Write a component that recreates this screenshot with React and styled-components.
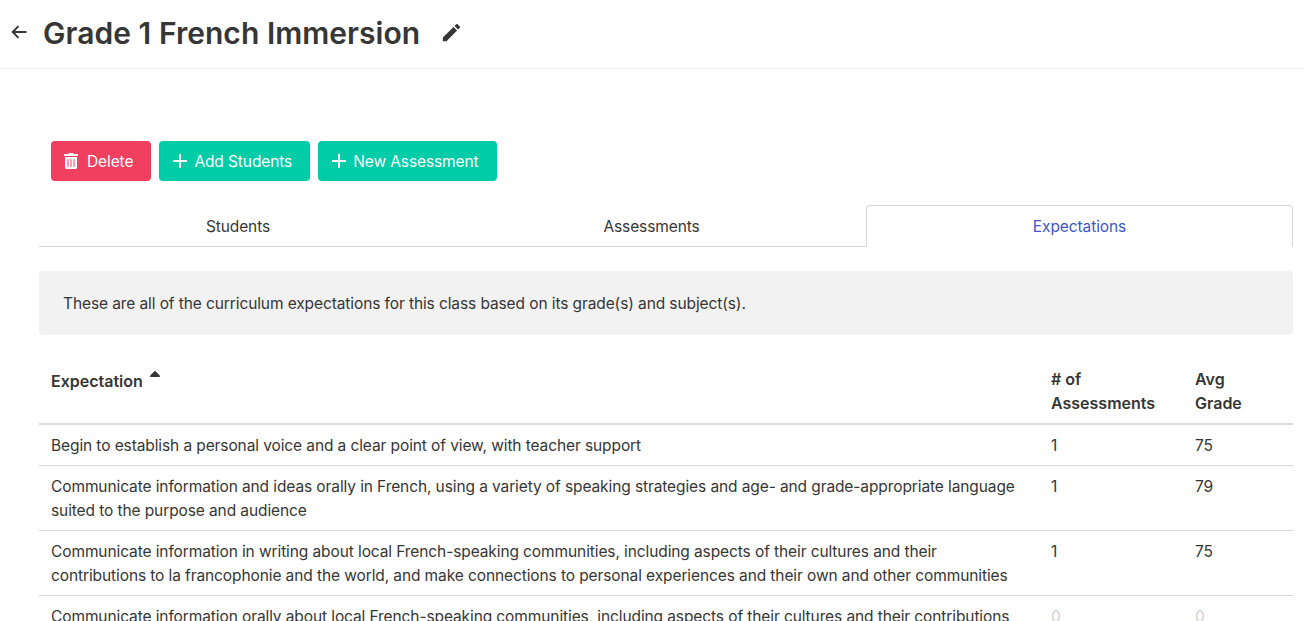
import styled, { createGlobalStyle } from "styled-components";
import { FaTrashAlt, FaSortUp } from "react-icons/fa";
import { MdAdd, MdEdit } from "react-icons/md";

const GlobalStyle = createGlobalStyle`
    html, body {
        margin: 0;
        height: 100%;
        overflow: hidden;
        background: #fff;
    }
    body {
        font-family: Inter, "Liberation Sans", sans-serif;
        font-size: 15.5px;
        letter-spacing: -0.1px;
        line-height: 24px;
        color: #363636;
    }
`;

const Header = styled.header`
    display: flex;
    align-items: center;
    box-sizing: border-box;
    height: 69px;
    border-bottom: 1px solid #f1f1f1;
    padding: 0 0 4px 11px;
`;

const BackIcon = styled.svg`
    width: 16px;
    height: 14px;
    fill: none;
    stroke: #363636;
    stroke-width: 1.9;
`;

const Title = styled.h1`
    margin: 2px 0 0 16px;
    font-size: 30px;
    letter-spacing: 0.04px;
    line-height: 40px;
    font-weight: 600;
    color: #363636;
`;

const EditIcon = styled(MdEdit)`
    width: 23px;
    height: 23px;
    margin-left: 20px;
    color: #363636;
`;

const Content = styled.main`
    padding: 72px 11px 0 39px;
`;

const Toolbar = styled.div`
    display: flex;
    gap: 8px;
    padding-left: 12px;
`;

const ActionButton = styled.button`
    display: flex;
    align-items: center;
    gap: ${({ $danger }) => ($danger ? "8px" : "2px")};
    height: 40px;
    padding: 0 18px 0 ${({ $danger }) => ($danger ? "12px" : "9px")};
    border: none;
    border-radius: 4px;
    background: ${({ $danger }) => ($danger ? "#f1405f" : "#00cca8")};
    color: #fff;
    font: inherit;
    letter-spacing: inherit;

    svg {
        flex: none;
    }
`;

const ButtonLabel = styled.span`
    padding-top: 2px;
`;

const Tabs = styled.div`
    display: grid;
    grid-template-columns: 398px 429px 427px;
    height: 42px;
    margin-top: 24px;
`;

const Tab = styled.div`
    display: flex;
    align-items: center;
    justify-content: center;
    box-sizing: border-box;
    padding-top: 2px;
    color: ${({ $active }) => ($active ? "#3e56c4" : "#363636")};
    border: 1px solid ${({ $active }) => ($active ? "#d5d5d5" : "transparent")};
    border-bottom: ${({ $active }) => ($active ? "1px solid transparent" : "1px solid #d5d5d5")};
    border-radius: ${({ $active }) => ($active ? "4px 4px 0 0" : "0")};
    ${({ $active }) => (!$active ? "border-left: none; border-right: none;" : "")}
`;

const Notice = styled.div`
    margin-top: 24px;
    height: 64px;
    display: flex;
    align-items: center;
    padding: 2px 24px 0;
    box-sizing: border-box;
    background: #f2f2f2;
    border-radius: 4px;
`;

const Table = styled.table`
    width: 1254px;
    margin-top: 20px;
    border-collapse: collapse;
    table-layout: fixed;
`;

const HeadCell = styled.th`
    padding: 12px 12px 8px;
    text-align: left;
    vertical-align: top;
    font-size: 16px;
    letter-spacing: 0;
    font-weight: 600;
    border-bottom: 2px solid #d9d9d9;
`;

const SortLabel = styled.div`
    display: flex;
    align-items: flex-start;
    gap: 6px;
    margin-top: 2px;
`;

const SortIcon = styled(FaSortUp)`
    width: 12px;
    height: 18px;
`;

const Cell = styled.td`
    padding: 9px 12px 7px;
    vertical-align: top;
    border-bottom: 1px solid #d9d9d9;
    color: ${({ $muted }) => ($muted ? "#d0d0d0" : "inherit")};
`;

const rows = [
    {
        text: "Begin to establish a personal voice and a clear point of view, with teacher support",
        count: 1,
        grade: 75,
    },
    {
        text: "Communicate information and ideas orally in French, using a variety of speaking strategies and age- and grade-appropriate language suited to the purpose and audience",
        count: 1,
        grade: 79,
    },
    {
        text: "Communicate information in writing about local French-speaking communities, including aspects of their cultures and their contributions to la francophonie and the world, and make connections to personal experiences and their own and other communities",
        count: 1,
        grade: 75,
    },
    {
        text: "Communicate information orally about local French-speaking communities, including aspects of their cultures and their contributions to la francophonie and the world",
        count: 0,
        grade: 0,
    },
];

const App = () => {
    return (
        <>
            <GlobalStyle />
            <Header>
                <BackIcon viewBox="0 0 16 14">
                    <path d="M15.5 7H2M7.5 1.2 1.7 7l5.8 5.8" />
                </BackIcon>
                <Title>Grade 1 French Immersion</Title>
                <EditIcon />
            </Header>
            <Content>
                <Toolbar>
                    <ActionButton $danger>
                        <FaTrashAlt size={16} />
                        <ButtonLabel>Delete</ButtonLabel>
                    </ActionButton>
                    <ActionButton>
                        <MdAdd size={24} />
                        <ButtonLabel>Add Students</ButtonLabel>
                    </ActionButton>
                    <ActionButton>
                        <MdAdd size={24} />
                        <ButtonLabel>New Assessment</ButtonLabel>
                    </ActionButton>
                </Toolbar>
                <Tabs>
                    <Tab>Students</Tab>
                    <Tab>Assessments</Tab>
                    <Tab $active>Expectations</Tab>
                </Tabs>
                <Notice>
                    These are all of the curriculum expectations for this class based on its grade(s) and subject(s).
                </Notice>
                <Table>
                    <colgroup>
                        <col style={{ width: 1000 }} />
                        <col style={{ width: 144 }} />
                        <col style={{ width: 110 }} />
                    </colgroup>
                    <thead>
                        <tr>
                            <HeadCell>
                                <SortLabel>
                                    Expectation
                                    <SortIcon />
                                </SortLabel>
                            </HeadCell>
                            <HeadCell># of Assessments</HeadCell>
                            <HeadCell>
                                Avg
                                <br />
                                Grade
                            </HeadCell>
                        </tr>
                    </thead>
                    <tbody>
                        {rows.map((row) => (
                            <tr key={row.text}>
                                <Cell>{row.text}</Cell>
                                <Cell $muted={row.count === 0}>{row.count}</Cell>
                                <Cell $muted={row.grade === 0}>{row.grade}</Cell>
                            </tr>
                        ))}
                    </tbody>
                </Table>
            </Content>
        </>
    );
};

export default App;
